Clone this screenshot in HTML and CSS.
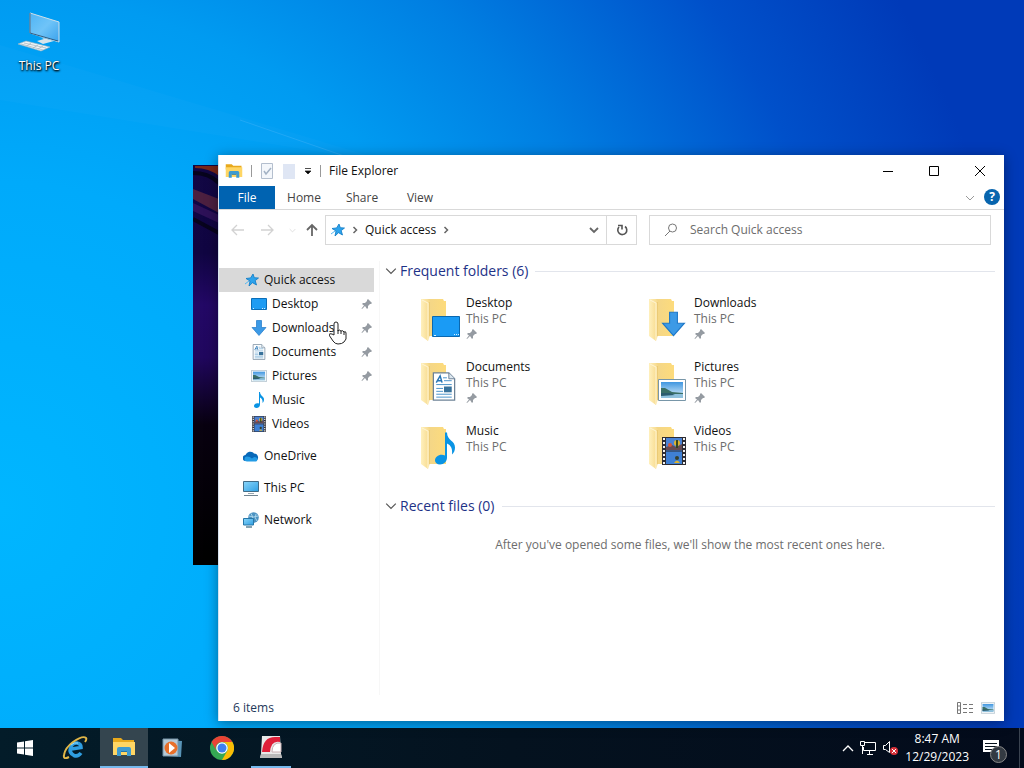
FILE: index.html
```html
<!DOCTYPE html>
<html lang="en">
<head>
    <meta charset="UTF-8">
    <meta name="viewport" content="width=device-width, initial-scale=1.0">
    <title>File Explorer</title>
    <link rel="stylesheet" href="styles.css">
</head>
<body>
    <svg class="sprite" width="0" height="0" aria-hidden="true">
        <defs>
            <linearGradient id="paper" x1="0" x2="1"><stop offset="0" stop-color="#f3d688"/><stop offset="1" stop-color="#fddb7c"/></linearGradient>
            <linearGradient id="flap" x1="0" x2="1"><stop offset="0" stop-color="#fff0bd"/><stop offset="1" stop-color="#f6d888"/></linearGradient>
            <linearGradient id="screen" x1="0" y1="0" x2="1" y2="1"><stop offset="0" stop-color="#8ad6fa"/><stop offset="1" stop-color="#2f9fe3"/></linearGradient>
            <linearGradient id="glass" x1="0" y1="0" x2="1" y2="1"><stop offset="0" stop-color="#4fb4f5"/><stop offset=".5" stop-color="#6fc4f8"/><stop offset="1" stop-color="#3aa2ec"/></linearGradient>
            <linearGradient id="sky" x1="0" y1="0" x2="0" y2="1"><stop offset="0" stop-color="#3f96e0"/><stop offset="1" stop-color="#e5f5fc"/></linearGradient>
            <symbol id="folder" viewBox="0 0 40 48">
                <path d="M8 4h15l1 2h2v35H8z" fill="url(#paper)"/>
                <path d="M1 4h7l2 2v34l-2 6-7-5z" fill="url(#flap)"/>
                <path d="M2 5l6 3v37" stroke="#fff5d4" fill="none"/>
                <path d="M9.500 7v34" stroke="#e6c36b" stroke-width=".7" fill="none"/>
            </symbol>
            <symbol id="explorer" viewBox="0 0 24 20">
                <path d="M1 1h8l2 2h11v5H1z" fill="#e8a91c"/>
                <path d="M1 5h22v13H1z" fill="#ffd664"/>
                <path d="M5 19v-7q0-2 2-2h10q2 0 2 2v7h-4v-5H9v5z" fill="#3e9bd0"/>
                <path d="M9 14h6v1H9z" fill="#2674a6"/>
            </symbol>
            <symbol id="pin" viewBox="0 0 12 12">
                <path d="M7 1l4 4-1 1H9L7 8v2L6 11 4 8 1 11l-.5-.5L3 7.500 1 6l1-1h2l2-2V2z" fill="#959ba2"/>
            </symbol>
            <symbol id="star" viewBox="0 0 14 14">
                <path d="M8 1l1.300 3.700L13.500 5 10.200 7.600 11.500 12 7.500 9.700 4 13l1-5L1 5.500l4.600-.6z" fill="#2da3ec" stroke="#0b79c4" stroke-width=".8"/>
                <path d="M0 11l4-3" stroke="#54b8f2"/>
            </symbol>
            <symbol id="desktop" viewBox="0 0 16 12">
                <path d="M.5.5h15v11H.5z" fill="#1e9cf3" stroke="#0b6eb8"/>
                <path d="M2 10.500h1M11 10.500h1M13 10.500h1" stroke="#d6f1ff"/>
            </symbol>
            <symbol id="desktop-large" viewBox="0 0 28 21">
                <path d="M.5.5h27v20H.5z" fill="#1a9bf5" stroke="#0a68b0"/>
                <path d="M2 19.500h2M22 18.500h1M24 18.500h1M26 18.500h1" stroke="#d6f1ff"/>
            </symbol>
            <symbol id="download" viewBox="0 0 16 16">
                <path d="M5.500.500h5v7h4.500L8 15.500 1 7.500h4.500z" fill="#3c9ae6" stroke="#1f78c8" stroke-width=".7"/>
            </symbol>
            <symbol id="document" viewBox="0 0 24 30">
                <path d="M1 1h16l6 6v22H1z" fill="#fff" stroke="#6d8296" stroke-width="1.300"/>
                <path d="M17 1v6h6" fill="#dce7ef" stroke="#6d8296"/>
                <path d="M4 11L8 4l2 7M5 9h4" fill="none" stroke="#2775b5" stroke-width="1.500"/>
                <path d="M11 6h4M12 9h8M4 13h16M4 17h7M4 20h7M4 23h16M4 26h16" stroke="#4891c9"/>
                <path d="M12 15h8v6h-8z" fill="#38729b"/>
            </symbol>
            <symbol id="picture" viewBox="0 0 28 22">
                <path d="M.5.5h27v21H.5z" fill="#fff" stroke="#7896a8"/>
                <path d="M3 3h22v16H3z" fill="url(#sky)"/>
                <path d="M3 9l4 0 7 4 11 1v2H3z" fill="#3a6f66"/>
                <path d="M3 15h22v4H3z" fill="#8fc1dd"/>
                <path d="M3 14l9 0 5 2-14 1z" fill="#2c5c6e"/>
            </symbol>
            <symbol id="music" viewBox="0 0 22 32">
                <path d="M11 0h2c0 8 8 8 8 15 0 3-1 5-3 7 1-8-3-10-5-11v14c0 4-3 7-7 7-3 0-5-2-5-4 0-4 5-7 10-5z" fill="#0a94e4"/>
            </symbol>
            <symbol id="video" viewBox="0 0 24 28">
                <path d="M0 0h24v28H0z" fill="#2d2c33"/>
                <path d="M4 1h16v12.500H4z" fill="#4a82d4"/>
                <path d="M4 14.500h16V27H4z" fill="#3f80d4"/>
                <path d="M2 1v27M22 1v27" stroke="#f3f3f3" stroke-width="2" stroke-dasharray="2 2"/>
                <path d="M4 10l6-2 4 2 6-3v6H4z" fill="#684b52"/>
                <circle cx="15" cy="6" r="3" fill="#e0b42b"/><path d="M14 3h2v8h-2z" fill="#374923"/>
                <circle cx="8" cy="8" r="2" fill="#d5573b"/><circle cx="15" cy="21" r="2" fill="#36402d"/>
                <path d="M12 26q3-5 6 0" fill="#deb32e"/>
            </symbol>
            <symbol id="cloud" viewBox="0 0 16 11">
                <path d="M3 10a3 3 0 01-.5-6A5 5 0 0111 2.500 4 4 0 0113 10z" fill="#0869b9"/>
                <path d="M4 10.500a2.500 2.500 0 010-5q3 0 5 2 2-2.500 4.500-1a2.300 2.300 0 01-.5 4z" fill="#239be5"/>
            </symbol>
            <symbol id="monitor" viewBox="0 0 16 16">
                <path d="M.5 1.500h15v10H.5z" fill="url(#screen)" stroke="#406b86"/>
                <path d="M5 13.500h6" stroke="#98a6af"/><path d="M1 15.500h14" stroke="#718490"/>
            </symbol>
            <symbol id="network" viewBox="0 0 16 16">
                <circle cx="10.500" cy="5.500" r="5.300" fill="#4d93c2"/>
                <path d="M8 1.500q3 3 1 8M13 2q-2 4 1 7M6 4q4 2 9 0" stroke="#a9d4ea" fill="none"/>
                <path d="M.5 6.500h10v6.500H.5z" fill="url(#screen)" stroke="#2777a8"/><path d="M3 15h6" stroke="#5d8499" stroke-width="1.500"/>
            </symbol>
            <symbol id="chevron" viewBox="0 0 10 10"><path d="M1 3l4 4 4-4" fill="none" stroke="currentColor"/></symbol>
            <symbol id="crumb" viewBox="0 0 6 8"><path d="M1.500 1l3 3-3 3" fill="none" stroke="currentColor" stroke-width="1.500"/></symbol>
            <symbol id="arrow" viewBox="0 0 14 12"><path d="M13 6H1M6 1L1 6l5 5" fill="none" stroke="currentColor" stroke-width="1.300"/></symbol>
        </defs>
    </svg>

    <main class="desktop">
        <svg class="rays" viewBox="0 0 1024 728" preserveAspectRatio="none" aria-hidden="true">
            <path d="M0 45L400 165 0 100z" fill="#fff" opacity=".02"/>
            <path d="M240 120L350 158" stroke="#48b5fa" opacity=".4"/>
        </svg>
        <button class="shortcut">
            <svg width="44" height="44" viewBox="0 0 44 44">
                <path d="M13 3l29 9v20l-29-9z" fill="url(#glass)" stroke="#d0dfe8"/>
                <path d="M13 3v20l28 8" fill="none" stroke="#285a83"/>
                <path d="M23 27l4 2-7 2 6 3 11-3-7-2z" fill="#d8e4ea"/>
                <path d="M1 34l8-3 24 6-9 4z" fill="#eef3f6" stroke="#9ab1be" stroke-width=".6"/>
                <path d="M4 34l22 6M7 33l22 5M10 36l4-3M16 38l5-3M21 39l5-3" stroke="#a0b1bc" stroke-width=".7"/>
            </svg>
            <span>This PC</span>
        </button>

        <div class="back-window">
            <svg viewBox="0 0 26 400" preserveAspectRatio="none" aria-hidden="true">
                <defs>
                    <linearGradient id="back" x1="0" y1="0" x2="0" y2="1"><stop offset="0" stop-color="#120744"/><stop offset=".22" stop-color="#100542"/><stop offset=".35" stop-color="#230866"/><stop offset=".48" stop-color="#20075e"/><stop offset=".65" stop-color="#080110"/><stop offset="1" stop-color="#000"/></linearGradient>
                </defs>
                <path d="M0 0h26v400H0z" fill="url(#back)"/>
                <path d="M2 1h24v10Q16 3 2 3z" fill="#7b2718"/>
                <path d="M0 24l26 10v14L0 34z" fill="#4c2040"/>
                <path d="M0 38l26 12v8L0 46z" fill="#2d1158"/>
                <path d="M0 8q16 0 26 10M0 54l26 14" fill="none" stroke="#07041d" stroke-width="4"/>
            </svg>
        </div>

        <section class="window">
            <header class="titlebar">
                <svg width="18" height="16" viewBox="0 0 24 20"><use href="#explorer"/></svg>
                <span class="divider"></span>
                <button class="quick-button" aria-label="Properties"><svg width="14" height="16"><path d="M1.500.500h11v15h-11z" fill="#f4f7fb" stroke="#b4bfce"/><path d="M4 8l2 3 5-6" fill="none" stroke="#a3b2c4" stroke-width="1.500"/></svg></button>
                <button class="quick-button" aria-label="New folder"><svg width="14" height="16"><path d="M1 1h12v15H1z" fill="#dfe6f4"/></svg></button>
                <button class="quick-more" aria-label="Customize toolbar"><svg width="8" height="8"><path d="M1 1.500h6M1 4h6L4 7z" stroke="#222" stroke-width=".8"/></svg></button>
                <span class="divider"></span>
                <h1>File Explorer</h1>
                <div class="window-actions">
                    <button aria-label="Minimize"><svg width="12" height="12"><path d="M1 6.500h10" stroke="#000"/></svg></button>
                    <button aria-label="Maximize"><svg width="12" height="12"><path d="M1.500 1.500h9v9h-9z" fill="none" stroke="#000"/></svg></button>
                    <button aria-label="Close"><svg width="12" height="12"><path d="M1 1l10 10M11 1L1 11" stroke="#000"/></svg></button>
                </div>
            </header>

            <nav class="ribbon">
                <button class="file-tab">File</button>
                <button>Home</button>
                <button>Share</button>
                <button>View</button>
                <button class="expand" aria-label="Expand ribbon"><svg width="10" height="10"><use href="#chevron"/></svg></button>
                <button class="help" aria-label="Help">?</button>
            </nav>

            <div class="location">
                <div class="history">
                    <button aria-label="Back"><svg width="14" height="12"><use href="#arrow"/></svg></button>
                    <button aria-label="Forward"><svg class="flip" width="14" height="12"><use href="#arrow"/></svg></button>
                    <button class="recent" aria-label="Recent locations"><svg width="7" height="7" viewBox="0 0 10 10"><use href="#chevron"/></svg></button>
                    <button class="up" aria-label="Up"><svg width="14" height="14"><path d="M7 13V2M2 7l5-5 5 5" fill="none" stroke="currentColor" stroke-width="1.800"/></svg></button>
                </div>
                <div class="address">
                    <svg width="14" height="14"><use href="#star"/></svg>
                    <svg width="6" height="8"><use href="#crumb"/></svg>
                    <button>Quick access</button>
                    <svg width="6" height="8"><use href="#crumb"/></svg>
                    <button class="previous" aria-label="Previous locations"><svg width="10" height="10"><path d="M1 3l4 4 4-4" fill="none" stroke="currentColor" stroke-width="1.800"/></svg></button>
                    <button class="refresh" aria-label="Refresh"><svg width="12" height="12"><path d="M9 2.500A4.500 4.500 0 11 3 3M2 1.500h4v4" fill="none" stroke="currentColor" stroke-width="1.600"/></svg></button>
                </div>
                <label class="search">
                    <svg width="14" height="14"><circle cx="8.500" cy="5" r="4" fill="none" stroke="currentColor"/><path d="M6 8l-5 5" stroke="currentColor"/></svg>
                    <input type="text" placeholder="Search Quick access" aria-label="Search Quick access">
                </label>
            </div>

            <div class="content">
                <nav class="sidebar">
                    <a href="#" class="root active"><svg width="14" height="14"><use href="#star"/></svg>Quick access</a>
                    <a href="#"><svg width="16" height="12"><use href="#desktop"/></svg>Desktop<svg class="pin" width="12" height="12"><use href="#pin"/></svg></a>
                    <a href="#"><svg width="16" height="16"><use href="#download"/></svg>Downloads<svg class="pin" width="12" height="12"><use href="#pin"/></svg></a>
                    <a href="#"><svg width="16" height="16"><use href="#document"/></svg>Documents<svg class="pin" width="12" height="12"><use href="#pin"/></svg></a>
                    <a href="#"><svg width="16" height="12"><use href="#picture"/></svg>Pictures<svg class="pin" width="12" height="12"><use href="#pin"/></svg></a>
                    <a href="#"><svg width="16" height="16"><use href="#music"/></svg>Music</a>
                    <a href="#"><svg width="16" height="16"><use href="#video"/></svg>Videos</a>
                    <a href="#" class="root group"><svg width="16" height="11"><use href="#cloud"/></svg>OneDrive</a>
                    <a href="#" class="root group"><svg width="16" height="16"><use href="#monitor"/></svg>This PC</a>
                    <a href="#" class="root group"><svg width="16" height="16"><use href="#network"/></svg>Network</a>
                </nav>

                <div class="files">
                    <h2><svg width="12" height="12" viewBox="0 0 10 10"><use href="#chevron"/></svg>Frequent folders (6)</h2>
                    <div class="folders">
                        <a href="#" class="folder">
                            <span class="thumb"><svg width="40" height="48"><use href="#folder"/></svg><svg class="badge wide" width="28" height="21"><use href="#desktop-large"/></svg></span>
                            <span class="info"><span>Desktop</span><small>This PC</small><svg width="12" height="12"><use href="#pin"/></svg></span>
                        </a>
                        <a href="#" class="folder">
                            <span class="thumb"><svg width="40" height="48"><use href="#folder"/></svg><svg class="badge" width="25" height="26"><use href="#download"/></svg></span>
                            <span class="info"><span>Downloads</span><small>This PC</small><svg width="12" height="12"><use href="#pin"/></svg></span>
                        </a>
                        <a href="#" class="folder">
                            <span class="thumb"><svg width="40" height="48"><use href="#folder"/></svg><svg class="badge narrow" width="24" height="29"><use href="#document"/></svg></span>
                            <span class="info"><span>Documents</span><small>This PC</small><svg width="12" height="12"><use href="#pin"/></svg></span>
                        </a>
                        <a href="#" class="folder">
                            <span class="thumb"><svg width="40" height="48"><use href="#folder"/></svg><svg class="badge" width="28" height="22"><use href="#picture"/></svg></span>
                            <span class="info"><span>Pictures</span><small>This PC</small><svg width="12" height="12"><use href="#pin"/></svg></span>
                        </a>
                        <a href="#" class="folder">
                            <span class="thumb"><svg width="40" height="48"><use href="#folder"/></svg><svg class="badge narrow" width="22" height="33"><use href="#music"/></svg></span>
                            <span class="info"><span>Music</span><small>This PC</small></span>
                        </a>
                        <a href="#" class="folder">
                            <span class="thumb"><svg width="40" height="48"><use href="#folder"/></svg><svg class="badge" width="24" height="28"><use href="#video"/></svg></span>
                            <span class="info"><span>Videos</span><small>This PC</small></span>
                        </a>
                    </div>
                    <h2><svg width="12" height="12" viewBox="0 0 10 10"><use href="#chevron"/></svg>Recent files (0)</h2>
                    <p class="empty">After you've opened some files, we'll show the most recent ones here.</p>
                </div>
            </div>

            <footer class="status">
                <span>6 items</span>
                <button aria-label="Details view"><svg width="16" height="12"><path d="M.5.5h3v11h-3zM.5 4h3M.5 8h3M6 2.500h4M12 2.500h4M6 6.500h4M12 6.500h4M6 10.500h4M12 10.500h4" fill="none" stroke="#777"/></svg></button>
                <button aria-label="Large icons view"><svg width="14" height="12"><use href="#picture"/></svg></button>
            </footer>
        </section>

        <svg class="cursor" width="18" height="24" viewBox="0 0 18 24" aria-hidden="true">
            <path d="M5 14V3q0-2 2-2t2 2v7q1-2 3 0 2-1 3 1 2-1 2 1v6l-2 3q-2 2-6 2-3 0-5-3l-4-6q0-2 3-1z" fill="#fff" stroke="#222"/>
            <path d="M9 9v4M12 10v3M15 11v3" stroke="#222"/>
        </svg>
    </main>

    <footer class="taskbar">
        <button class="task start" aria-label="Start"><svg width="16" height="16"><path d="M0 2.500l7-1v6H0zM8 1.300L16 0v7.500H8zM0 8.500h7v6l-7-1zM8 8.500h8V16l-8-1.300z" fill="#fff"/></svg></button>
        <button class="task" aria-label="Internet Explorer">
            <svg width="26" height="24">
                <path d="M19 17Q16 21 12 19.500 7 17 8.500 12 10 6.500 15 7 19 7.500 19 11.500L9.500 13" fill="none" stroke="#2f9ee1" stroke-width="3.600"/>
                <path d="M7 21q-6 3-5-2Q3 12 11 6q10-7 13-4 1 1-1 4" fill="none" stroke="#e0b648" stroke-width="2"/>
                <path d="M9 9q3-3 7-2" fill="none" stroke="#92dcff"/>
            </svg>
        </button>
        <button class="task current" aria-label="File Explorer"><svg width="24" height="20"><use href="#explorer"/></svg></button>
        <button class="task" aria-label="Media Player">
            <svg width="22" height="20"><path d="M4 2l16 1-1 16-14-1z" fill="#5994b7"/><path d="M1 1h15v17H1z" fill="#b6cad7" stroke="#7695a8"/><circle cx="9" cy="10" r="6.500" fill="#e8702a"/><path d="M7 5l6 5-6 5z" fill="#fff"/></svg>
        </button>
        <button class="task" aria-label="Chrome">
            <svg width="24" height="24"><circle cx="12" cy="12" r="12" fill="#35a853"/><path d="M1.600 6A12 12 0 0122.400 6H12a6 6 0 00-5.500 9z" fill="#e94335"/><path d="M12 6h10.400A12 12 0 0112 24l5.200-9A6 6 0 0012 6z" fill="#fbbc05"/><circle cx="12" cy="12" r="5.800" fill="#fff"/><circle cx="12" cy="12" r="4.500" fill="#3e80ef"/></svg>
        </button>
        <button class="task open" aria-label="Recorder">
            <svg width="24" height="24"><path d="M3 1h18l1 18 1 4H1l1-4z" fill="#e9e9e9"/><path d="M2 19h20l1 4H1z" fill="#b9b9b9"/><path d="M3 17Q4 2 16 2h5v5q-9-2-10 10z" fill="#df1f39"/><path d="M13 17q0-10 9-9v9z" fill="#fff" stroke="#c9b1b4"/></svg>
        </button>
        <div class="tray">
            <button aria-label="Show hidden icons"><svg width="12" height="8"><path d="M1 7l5-5 5 5" fill="none" stroke="#fff" stroke-width="1.300"/></svg></button>
            <button aria-label="Network"><svg width="18" height="16"><path d="M5.500 2.500h11v8h-12V7M8 14.500h6M10.500 11v3M1.500 1.500h4v4h-4zM3.500 6v8" fill="none" stroke="#fff"/></svg></button>
            <button aria-label="Muted"><svg width="18" height="16"><path d="M1.500 5.500h2l4-4v11l-4-3h-2z" fill="none" stroke="#fff"/><circle cx="12" cy="11" r="4" fill="#d73139"/><path d="M10 9l4 4M14 9l-4 4" stroke="#fff"/></svg></button>
            <button class="clock"><span>8:47 AM</span><span>12/29/2023</span></button>
            <button class="notifications" aria-label="Notifications"><svg width="18" height="17"><path d="M1 0h16v12h-4v4l-4-4H1z" fill="#fff"/><path d="M3 3.500h12M3 6.500h12M3 9.500h8" stroke="#08131e"/></svg><span>1</span></button>
        </div>
    </footer>
</body>
</html>
```
FILE: styles.css
```css
* {
    box-sizing: border-box;
}
body {
    margin: 0;
    height: 100vh;
    display: flex;
    flex-direction: column;
    overflow: hidden;
    font: 12px/16px "Open Sans", "Noto Sans", sans-serif;
    color: #111;
}
svg {
    display: block;
    flex-shrink: 0;
}
.sprite {
    position: absolute;
}
button {
    display: flex;
    align-items: center;
    justify-content: center;
    padding: 0;
    border: none;
    background: none;
    font: inherit;
    color: inherit;
    white-space: nowrap;
}
a {
    color: inherit;
    text-decoration: none;
}
.desktop {
    flex: 1;
    position: relative;
    background: radial-gradient(ellipse 106% 150% at 0 70%, #00b6ff 0, #00aafb 30%, #009bf1 47%, #007fe2 61%, #0050ca 80%, #003ab8 95%);
}
.rays {
    position: absolute;
    width: 100%;
    height: 100%;
}
.shortcut {
    position: absolute;
    left: 2px;
    top: 10px;
    width: 74px;
    flex-direction: column;
    gap: 4px;
    color: #fff;
    text-shadow: 1px 1px 2px #000, 0 1px 2px #000;
}
.back-window {
    position: absolute;
    left: 193px;
    top: 165px;
    width: 60px;
    bottom: 163px;
    background: #000;
}
.back-window svg {
    width: 26px;
    height: 100%;
}
.window {
    position: absolute;
    left: 218px;
    top: 155px;
    right: 20px;
    bottom: 7px;
    display: flex;
    flex-direction: column;
    background: #fff;
    border-left: 1px solid #d7e3f0;
    box-shadow: 0 2px 12px rgba(0, 0, 0, 0.4);
}
.titlebar {
    display: flex;
    align-items: center;
    height: 31px;
    gap: 8px;
    padding: 0 1px 0 6px;
}
.titlebar h1 {
    margin: 0;
    font-size: 12px;
    font-weight: normal;
}
.divider {
    width: 1px;
    height: 12px;
    background: #999;
}
.window-actions {
    display: flex;
    margin-left: auto;
    height: 31px;
}
.window-actions button {
    width: 46px;
}
.ribbon {
    display: flex;
    height: 24px;
    border-bottom: 1px solid #d9d9d9;
    color: #444;
}
.ribbon button {
    width: 58px;
}
.ribbon .file-tab {
    width: 56px;
    color: #fff;
    background: #0063b1;
}
.ribbon .expand {
    width: 20px;
    margin-left: auto;
    color: #999;
}
.ribbon .help {
    width: 16px;
    height: 16px;
    margin: 3px 4px;
    border-radius: 50%;
    background: #0865ae;
    color: #fff;
    font-weight: bold;
}
.location {
    display: grid;
    grid-template-columns: 106px 312fr 354fr;
    padding: 5px 13px 0 0;
    height: 35px;
}
.history {
    display: flex;
    padding-left: 12px;
    gap: 15px;
    color: #d2d2d2;
}
.history .recent {
    margin-right: -6px;
}
.history .up {
    color: #666;
}
.flip {
    transform: scaleX(-1);
}
.address {
    display: flex;
    align-items: center;
    gap: 7px;
    padding-left: 5px;
    border: 1px solid #d9d9d9;
    color: #666;
}
.address button {
    color: #111;
}
.address .previous {
    margin-left: auto;
    color: #666;
}
.address .refresh {
    width: 30px;
    height: 28px;
    border-left: 1px solid #d9d9d9;
    color: #555;
}
.search {
    display: flex;
    align-items: center;
    gap: 12px;
    margin-left: 12px;
    padding-left: 14px;
    border: 1px solid #d9d9d9;
    color: #777;
}
.search input {
    flex: 1;
    min-width: 0;
    padding: 0;
    border: none;
    outline: none;
    font: inherit;
}
.search input::placeholder {
    color: #6d6d6d;
}
.content {
    flex: 1;
    display: flex;
    min-height: 0;
    padding-top: 16px;
}
.sidebar {
    width: 161px;
    padding: 7px 5px 0 0;
    border-right: 1px solid #f7f7f7;
}
.sidebar a {
    display: flex;
    align-items: center;
    gap: 5px;
    height: 24px;
    padding: 0 1px 0 32px;
}
.sidebar .root {
    padding-left: 24px;
}
.sidebar .active {
    padding-left: 26px;
    background: #d9d9d9;
}
.sidebar .group {
    margin-top: 8px;
}
.pin {
    margin-left: auto;
}
.files {
    flex: 1;
    padding: 0 9px 0 5px;
}
.files h2 {
    display: flex;
    align-items: center;
    gap: 3px;
    height: 20px;
    margin: 0;
    font-size: 14px;
    font-weight: normal;
    color: #1e3287;
}
.files h2 svg {
    color: #555;
}
.files h2::after {
    content: "";
    flex: 1;
    height: 1px;
    margin-left: 4px;
    background: #e2e5ec;
}
.folders {
    display: grid;
    grid-template-columns: repeat(auto-fill, 228px);
    grid-auto-rows: 64px;
    padding: 14px 0 9px 35px;
    max-width: 540px;
}
.folder {
    display: flex;
    gap: 6px;
}
.thumb {
    position: relative;
    width: 40px;
    height: 48px;
}
.badge {
    position: absolute;
    right: 2px;
    bottom: 6px;
}
.wide {
    right: 0;
}
.narrow {
    right: 4px;
}
.info {
    display: flex;
    flex-direction: column;
}
.info small {
    font-size: 12px;
    color: #6d6d6d;
}
.info svg {
    margin-top: 1px;
}
.empty {
    margin: 21px 0 0;
    text-align: center;
    color: #6d6d6d;
}
.status {
    display: flex;
    align-items: center;
    gap: 8px;
    height: 26px;
    padding: 0 9px 0 14px;
    color: #1e395b;
}
.status span {
    margin-right: auto;
}
.cursor {
    position: absolute;
    left: 329px;
    top: 321px;
}
.taskbar {
    display: flex;
    height: 40px;
    background: linear-gradient(90deg, #031c29, #04121f 50%, #030b1b);
    color: #fff;
}
.task {
    width: 48px;
    margin-right: 1px;
}
.start {
    width: 50px;
}
.current {
    background: #34454f;
    border-bottom: 2px solid #76b9ed;
}
.open {
    width: 40px;
    margin: 0 4px;
    border-bottom: 2px solid #76b9ed;
}
.tray {
    display: flex;
    align-items: center;
    gap: 5px;
    margin: 0 4px 0 auto;
    border-right: 1px solid #3a4350;
}
.clock {
    flex-direction: column;
    line-height: 18px;
}
.notifications {
    position: relative;
    width: 34px;
    height: 40px;
    margin-right: 11px;
}
.notifications span {
    position: absolute;
    left: 16px;
    top: 18px;
    width: 17px;
    height: 17px;
    border: 1px solid #888;
    border-radius: 50%;
    background: #333a42;
    line-height: 15px;
}
```
